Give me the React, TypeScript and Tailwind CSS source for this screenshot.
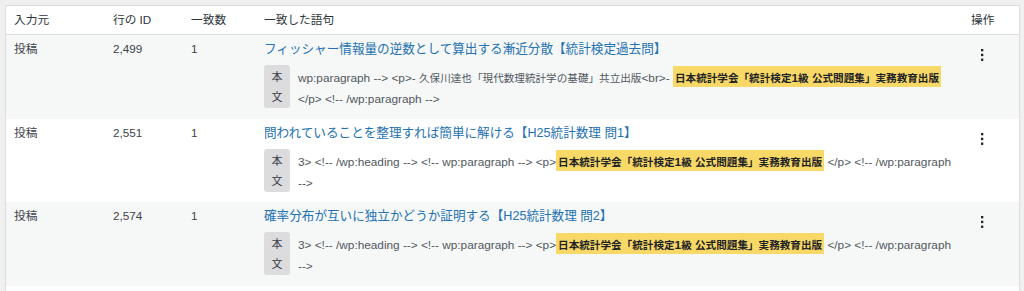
import React from "react";

const FONT = '"Liberation Sans", "Noto Sans CJK JP", sans-serif';

function Kebab() {
  return (
    <svg width="4" height="14" viewBox="0 0 4 14" className="block">
      <rect x="1" y="1" width="2.3" height="2.3" fill="#1d2327" />
      <rect x="1" y="5.8" width="2.3" height="2.3" fill="#1d2327" />
      <rect x="1" y="10.6" width="2.3" height="2.3" fill="#1d2327" />
    </svg>
  );
}

const CJK_RE = /([\u3000-\u9fff\uff00-\uffef]+)/;

function Mixed({ text }: { text: string }) {
  const parts = text.split(CJK_RE).filter((p) => p.length > 0);
  return (
    <>
      {parts.map((p, i) =>
        CJK_RE.test(p) ? (
          <span key={i} className="font-['Noto_Sans_CJK_JP',sans-serif] text-[10.6px]">
            {p}
          </span>
        ) : (
          <span key={i} className="font-['Liberation_Sans',sans-serif] text-[11.8px]">
            {p}
          </span>
        )
      )}
    </>
  );
}

function Hl({ text }: { text: string }) {
  return (
    <span className="bg-[#f8d866] font-bold text-[#1d2327] px-[2px] py-[2px]">
      <Mixed text={text} />
    </span>
  );
}

type Row = {
  src: string;
  id: string;
  count: string;
  title: string;
  pre: string;
  post: string;
  line2: string;
  striped: boolean;
};

const HL = "日本統計学会「統計検定1級 公式問題集」実務教育出版";

const rows: Row[] = [
  {
    src: "投稿",
    id: "2,499",
    count: "1",
    title: "フィッシャー情報量の逆数として算出する漸近分散【統計検定過去問】",
    pre: "wp:paragraph --> <p>- 久保川達也「現代数理統計学の基礎」共立出版<br>- ",
    post: "",
    line2: "</p> <!-- /wp:paragraph -->",
    striped: true,
  },
  {
    src: "投稿",
    id: "2,551",
    count: "1",
    title: "問われていることを整理すれば簡単に解ける【H25統計数理 問1】",
    pre: "3> <!-- /wp:heading --> <!-- wp:paragraph --> <p>",
    post: " </p> <!-- /wp:paragraph",
    line2: "-->",
    striped: false,
  },
  {
    src: "投稿",
    id: "2,574",
    count: "1",
    title: "確率分布が互いに独立かどうか証明する【H25統計数理 問2】",
    pre: "3> <!-- /wp:heading --> <!-- wp:paragraph --> <p>",
    post: " </p> <!-- /wp:paragraph",
    line2: "-->",
    striped: true,
  },
];

const GRID = "grid grid-cols-[99px_78px_73px_1fr_48px] pl-[8px]";

export default function App() {
  return (
    <div
      className="w-[1024px] h-[291px] overflow-hidden bg-[#f0f0f1] pl-[5px] pr-[4px] pt-[5px]"
      style={{ fontFamily: FONT }}
    >
      <div className="border border-[#dcdcde] bg-white h-[300px]">
        <div className={`${GRID} h-[29px] items-center border-b border-[#dcdcde] text-[11.7px] text-[#2c3338]`}>
          <div>入力元</div>
          <div>行の ID</div>
          <div>一致数</div>
          <div>一致した語句</div>
          <div>操作</div>
        </div>
        {rows.map((r, i) => (
          <div
            key={i}
            className={`${GRID} ${r.striped ? "bg-[#f6f7f7]" : "bg-white"} ${i === 1 ? "h-[83px]" : "h-[84px]"} pt-[6px]`}
          >
            <div className="text-[11.7px] leading-[16px] text-[#3c434a]">{r.src}</div>
            <div className="text-[11.7px] leading-[16px] text-[#3c434a]">{r.id}</div>
            <div className="text-[11.7px] leading-[16px] text-[#3c434a]">{r.count}</div>
            <div className="flex flex-col">
              <div className="text-[12.6px] leading-[16px] text-[#2271b1] whitespace-nowrap">{r.title}</div>
              <div className="flex mt-[8px] gap-[8px]">
                <div className="w-[26px] h-[43px] bg-[#dcdcde] rounded-[3px] flex flex-col items-center pt-[2px] text-[11px] leading-[20px] text-[#3c434a]">
                  <span>本</span>
                  <span>文</span>
                </div>
                <div className="pt-[2px] leading-[20px] text-[#50575e] whitespace-pre">
                  <div>
                    <Mixed text={r.pre} />
                    <Hl text={HL} />
                    {r.post && <Mixed text={r.post} />}
                  </div>
                  <div>
                    <Mixed text={r.line2} />
                  </div>
                </div>
              </div>
            </div>
            <div className="pl-[9px] pt-[7px]">
              <Kebab />
            </div>
          </div>
        ))}
      </div>
    </div>
  );
}
